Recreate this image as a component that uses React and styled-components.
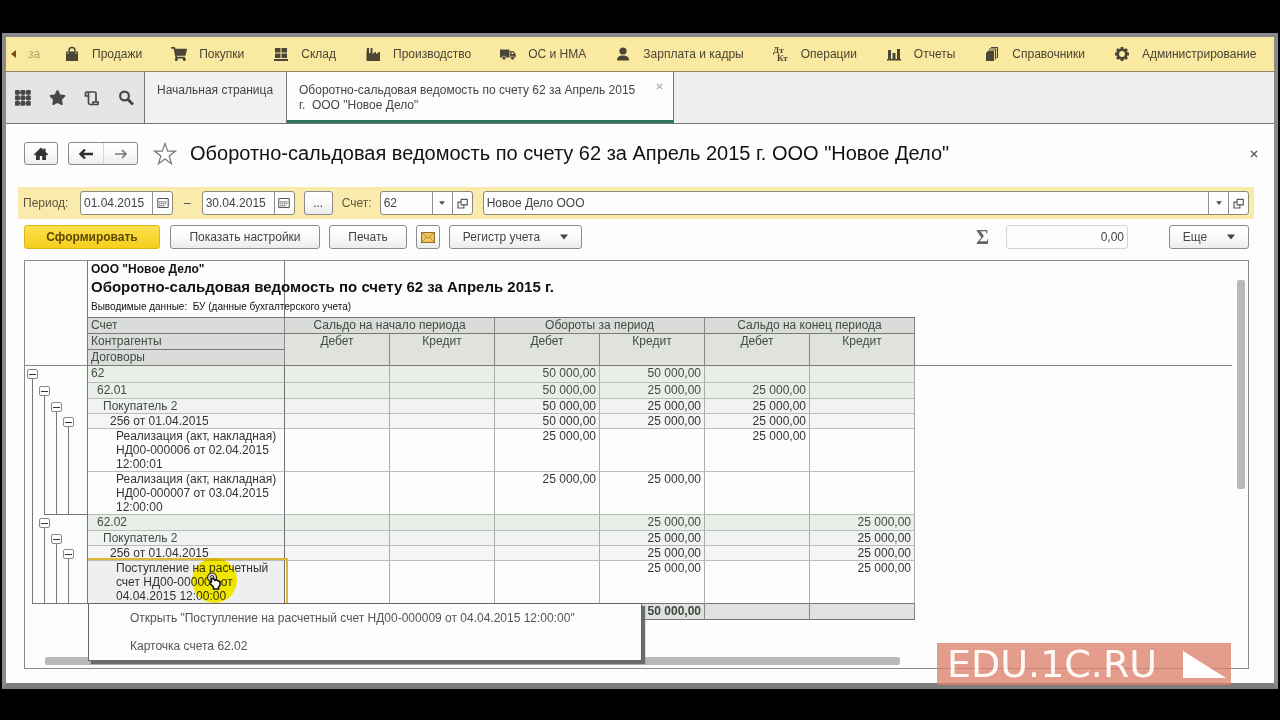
import React from "react"
import styled, { createGlobalStyle, css } from "styled-components"
import { FaShoppingCart, FaStar } from "react-icons/fa"

const GlobalStyle = createGlobalStyle`
  * {
    box-sizing: border-box;
  }
  body {
    margin: 0;
    background: #000;
    color: #444;
    font-family: "Liberation Sans", Arial, sans-serif;
    font-size: 12px;
  }
  button,
  input {
    font: inherit;
    color: inherit;
    margin: 0;
  }
  button {
    cursor: pointer;
  }
  svg {
    display: block;
    flex: none;
  }
`

const Screen = styled.div`
  position: relative;
  display: flex;
  flex-direction: column;
  min-height: 100vh;
  padding: 33px 2px 31px;
`
const Window = styled.div`
  flex: 1;
  display: flex;
  flex-direction: column;
  border: 4px solid #8b898c;
  border-bottom: 6px solid #7d7d7d;
  background: #fdfdfd;
`

/* sections bar */
const SectionBar = styled.nav`
  display: flex;
  align-items: center;
  gap: 29px;
  height: 35px;
  padding: 0 12px 0 5px;
  background: #fae9a0;
  border-bottom: 1px solid #8d8668;
  overflow: hidden;
`
const SectionScroll = styled.button`
  display: flex;
  align-items: center;
  gap: 12px;
  width: 24px;
  padding: 0;
  border: none;
  background: none;
  color: #b5a56b;
`
const SectionLink = styled.a`
  display: flex;
  align-items: center;
  gap: 12px;
  color: #4a4535;
  white-space: nowrap;
  text-decoration: none;
`

/* open windows bar */
const TabBar = styled.div`
  display: flex;
  height: 52px;
  background: #eee;
  border-bottom: 1px solid #777;
`
const Tools = styled.div`
  display: flex;
  align-items: center;
  gap: 18px;
  width: 139px;
  padding-left: 9px;
  background: #e5e5e5;
  border-right: 1px solid #777;
`
const ToolButton = styled.button`
  display: flex;
  padding: 0;
  border: none;
  background: none;
  color: #484848;
`
const Tab = styled.div`
  display: flex;
  align-items: flex-start;
  width: ${(props) => (props.$active ? "387px" : "142px")};
  padding: 11px 10px 0 12px;
  border-right: 1px solid #777;
  background: ${(props) => (props.$active ? "#fdfdfd" : "#f1f1f1")};
  ${(props) =>
    props.$active &&
    css`
      gap: 14px;
      border-bottom: 3px solid #2f7559;
    `}
`
const TabTitle = styled.button`
  flex: 1;
  padding: 0;
  border: none;
  background: none;
  text-align: left;
  line-height: 15px;
  white-space: pre-wrap;
`
const CloseButton = styled.button`
  display: flex;
  padding: 0;
  border: none;
  background: none;
  color: ${(props) => props.$color};
`

/* form */
const Form = styled.main`
  flex: 1;
  display: flex;
  flex-direction: column;
  padding: 18px 20px 14px 12px;
`
const TitleRow = styled.div`
  display: flex;
  align-items: center;
  height: 23px;
  margin: 0 -4px 22px 6px;
`
const buttonFace = css`
  border: 1px solid #8c8c8c;
  border-radius: 3px;
  background: linear-gradient(#fff, #fafafa 50%, #ececec);
`
const HomeButton = styled.button`
  ${buttonFace}
  display: flex;
  align-items: center;
  justify-content: center;
  width: 34px;
  height: 23px;
  padding: 0;
  color: #333;
`
const History = styled.div`
  ${buttonFace}
  display: flex;
  height: 23px;
  margin: 0 15px 0 10px;
  button {
    display: flex;
    align-items: center;
    justify-content: center;
    width: 34px;
    padding: 0;
    border: none;
    background: none;
    color: #2d2d2d;
  }
  button + button {
    border-left: 1px solid #d6d6d6;
    color: #777;
  }
`
const Title = styled.h1`
  flex: 1;
  margin: 0 0 0 13px;
  color: #111;
  font-size: 20px;
  font-weight: normal;
  white-space: nowrap;
`
const Filter = styled.div`
  display: flex;
  align-items: center;
  height: 32px;
  padding: 0 5px;
  background: #f9ebab;
`
const FieldLabel = styled.label`
  width: ${(props) => props.$width};
  color: #5c5640;
`
const FieldBox = styled.div`
  display: flex;
  height: 24px;
  width: ${(props) => props.$width || "auto"};
  flex: ${(props) => (props.$width ? "none" : 1)};
  border: 1px solid #8f8a78;
  border-radius: 3px;
  background: #fdfdfd;
  input {
    flex: 1;
    min-width: 0;
    padding: 0 3px;
    border: none;
    background: none;
    outline: none;
  }
  button {
    display: flex;
    align-items: center;
    justify-content: center;
    width: 20px;
    padding: 0;
    border: none;
    border-left: 1px solid #8f8f8f;
    background: none;
    color: #555;
  }
`
const AccountBox = styled(FieldBox)`
  margin-right: 10px;
`
const Dash = styled.span`
  margin: 0 11px;
`
const Commands = styled.div`
  display: flex;
  align-items: center;
  gap: 9px;
  margin: 6px 5px 11px 6px;
`
const Button = styled.button`
  ${buttonFace}
  display: flex;
  align-items: center;
  justify-content: center;
  gap: 20px;
  width: ${(props) => props.$width};
  height: 24px;
  padding: 0;
  ${(props) =>
    props.$primary &&
    css`
      margin-right: 1px;
      border-color: #d9b61c;
      background: linear-gradient(#fbe04e, #f5cf1d);
      color: #5d4a00;
      font-weight: bold;
    `}
`
const MoreButton = styled(Button)`
  margin: 0 9px;
`
const Sigma = styled.label`
  margin: 0 8px 0 auto;
  color: #666;
  font-family: "Liberation Serif", serif;
  font-size: 20px;
  font-weight: bold;
  line-height: 24px;
`
const SumInput = styled.input`
  width: 122px;
  height: 24px;
  margin-right: 32px;
  padding: 0 3px;
  border: 1px solid #d4d4d4;
  border-radius: 3px;
  background: #fdfdfd;
  text-align: right;
`

/* spreadsheet */
const Sheet = styled.div`
  flex: 1;
  display: grid;
  grid-template-columns: 1fr 16px;
  grid-template-rows: 1fr 12px;
  margin: 0 5px 0 6px;
  border: 1px solid #8a8a8a;
`
const VerticalTrack = styled.div`
  display: flex;
  justify-content: center;
  padding: 19px 0 0 2px;
`
const HorizontalTrack = styled.div`
  padding: 1px 0 0 20px;
`
const Thumb = styled.div`
  border-radius: 2px;
  background: #b9b9b9;
  ${(props) =>
    props.$vertical ? "width: 8px; height: 209px;" : "width: 72%; height: 8px;"}
`
const Report = styled.table`
  align-self: start;
  width: 100%;
  table-layout: fixed;
  border-collapse: separate;
  border-spacing: 0;
  color: #333;
  line-height: 14px;
  td,
  th {
    padding: 0 3px;
    vertical-align: top;
  }
`
const Col = styled.col`
  width: ${(props) => props.$width};
`
const Gutter = styled.td`
  && {
    height: ${(props) => props.$height};
    padding: 0 0 0 2px;
    border-right: 1px solid #777;
    ${(props) => props.$frozen && "border-bottom: 1px solid #888;"}
  }
`
const Filler = styled.td`
  ${(props) => props.$frozen && "border-bottom: 1px solid #888;"}
`
const HeadingCell = styled.td`
  border-right: 1px solid #777;
  ${(props) => props.$last && "border-bottom: 1px solid #777;"}
  color: #111;
  font-size: ${(props) => props.$size};
  font-weight: ${(props) => (props.$bold ? "bold" : "normal")};
  white-space: pre;
  && {
    vertical-align: middle;
  }
`
const HeadingRest = styled.td`
  ${(props) => props.$last && "border-bottom: 1px solid #777;"}
`
const HeadCell = styled.th`
  height: 16px;
  border-right: 1px solid #858885;
  border-bottom: 1px solid #777a77;
  background: ${(props) => (props.$light ? "#e0e3dc" : "#dadcd9")};
  color: #414c44;
  font-weight: normal;
  text-align: ${(props) => props.$align || "center"};
`
const levelColors = ["#e9eee6", "#e8eee8", "#f1f3f1", "#f5f5f4", "#fdfdfd"]
const levelIndents = ["3px", "9px", "15px", "22px", "28px"]

const NameCell = styled.th`
  position: relative;
  border-right: 1px solid #6f6f6f;
  border-bottom: 1px solid ${(props) => (props.$last ? "#777" : "#b9bcb9")};
  background: ${(props) => (props.$selected ? "#f0eff0" : levelColors[props.$level])};
  color: ${(props) => (props.$level < 3 ? "#414c44" : "#333")};
  font-weight: normal;
  text-align: left;
  && {
    padding-left: ${(props) => levelIndents[props.$level]};
  }
`
const SumCell = styled.td`
  border-right: 1px solid #a9aca9;
  border-bottom: 1px solid ${(props) => (props.$last ? "#777" : "#b9bcb9")};
  background: ${(props) => levelColors[props.$level]};
  color: ${(props) => (props.$level < 2 ? "#414c44" : "#333")};
  text-align: right;
`
const TotalCell = styled.td`
  height: 16px;
  border-right: 1px solid #858885;
  border-bottom: 1px solid #777a77;
  background: #dfe2df;
  color: #3d4a41;
  font-weight: bold;
  text-align: right;
`

/* outline in the gutter */
const Tree = styled.div`
  display: flex;
  height: 100%;
`
const TreeStep = styled.span`
  display: flex;
  flex-direction: column;
  width: 12px;
  &:last-child {
    flex: 1;
  }
`
const Stem = styled.span`
  flex: 1;
  margin-left: 5px;
  border-left: 1px solid #777;
  ${(props) => props.$foot && "border-bottom: 1px solid #777;"}
`
const FootStem = styled.span`
  flex: 1;
  border-bottom: 1px solid #777;
  background: linear-gradient(#777, #777) 5px 0 / 1px 100% no-repeat;
`
const Toggle = styled.button`
  display: flex;
  align-items: center;
  justify-content: center;
  width: 11px;
  height: 10px;
  margin-top: 3px;
  padding: 0;
  border: 1px solid #888;
  border-radius: 2px;
  background: #fff;
  &::before {
    content: "";
    width: 7px;
    height: 1px;
    background: #333;
  }
`

/* selected cell */
const Selection = styled.span`
  position: absolute;
  inset: -3px -4px 0 0;
  border-top: 2px solid #dcb93a;
  border-right: 2px solid #dcb93a;
`
const Spot = styled.span`
  position: absolute;
  left: 104px;
  top: -3px;
  width: 45px;
  height: 45px;
  border-radius: 50%;
  background: #fff600;
  mix-blend-mode: multiply;
`
const Pointer = styled.span`
  position: absolute;
  left: 118px;
  top: 11px;
`
const Popup = styled.div`
  position: absolute;
  z-index: 2;
  top: 100%;
  left: 0;
  width: 554px;
  border: 1px solid #666;
  background: #fdfdfd;
  box-shadow: 3px 3px 1px #6b6b6b;
`
const PopupItem = styled.button`
  display: block;
  width: 100%;
  height: 28px;
  padding: 0 41px;
  border: none;
  background: none;
  color: #555;
  text-align: left;
  white-space: nowrap;
`
const Watermark = styled.div`
  position: absolute;
  right: 49px;
  bottom: 35px;
  display: flex;
  align-items: center;
  justify-content: space-between;
  width: 294px;
  height: 42px;
  padding: 0 5px 0 10px;
  background: rgba(221, 128, 108, 0.78);
  color: #fffaf5;
  font-family: "DejaVu Sans", sans-serif;
  font-size: 38px;
`

const Icon = ({ size = 16, children }) => (
  <svg width={size} height={size} viewBox="0 0 16 16" fill="currentColor" aria-hidden="true">
    {children}
  </svg>
)
const BagIcon = () => (
  <Icon>
    <path d="M2 5.500h12V15H2z" />
    <path d="M5 8V4.500a3 3 0 0 1 6 0V8" fill="none" stroke="currentColor" strokeWidth="1.400" />
    <path d="M4 6v2M12 6v2" stroke="#fae9a0" strokeWidth="0.800" />
  </Icon>
)
const StockIcon = () => (
  <Icon>
    <path d="M2 2h5.500v4.500H2zM8.500 2H14v4.500H8.500zM2 7.500h5.500V12H2zM8.500 7.500H14V12H8.500zM1 13h14v2H1z" />
  </Icon>
)
const FactoryIcon = () => (
  <Icon>
    <path d="M1.500 15V7L2 2h2v5h1.500V2h2v6l3.500-2.500V8l4-2.500V15z" />
  </Icon>
)
const TruckIcon = () => (
  <Icon>
    <path d="M0 3.500h9.500v8H0zM10.200 5h3l2.500 3v3.500h-5.500z" />
    <path d="M11.500 6.200h1.400l1.300 1.800h-2.700z" fill="#fae9a0" />
    <circle cx="4" cy="12" r="1.900" stroke="#fae9a0" strokeWidth="0.600" />
    <circle cx="12.500" cy="12" r="1.900" stroke="#fae9a0" strokeWidth="0.600" />
  </Icon>
)
const PersonIcon = () => (
  <Icon>
    <circle cx="8" cy="5" r="3.600" />
    <path d="M2 14.500c0-3.500 2-4.500 4.200-5h3.600c2.200.5 4.200 1.500 4.200 5z" />
  </Icon>
)
const PostingIcon = () => (
  <Icon>
    <text x="0" y="7" fontSize="9" fontWeight="bold" fontFamily="Liberation Serif, serif">Дт</text>
    <text x="4" y="15" fontSize="9" fontWeight="bold" fontFamily="Liberation Serif, serif">Кт</text>
  </Icon>
)
const ChartIcon = () => (
  <Icon>
    <path d="M2 4h3v9H2zM6.500 7h3v6h-3zM11 3h3v10h-3zM1 13h14v1.500H1z" />
  </Icon>
)
const BooksIcon = () => (
  <Icon>
    <path d="M2 7l2.500-2.500H10V15H2z" />
    <path d="M5 3h6.500v10.500M7 1.500h6.500V12" fill="none" stroke="currentColor" strokeWidth="1.200" />
  </Icon>
)
const GearIcon = () => (
  <Icon>
    <circle cx="8" cy="8" r="4.300" fill="none" stroke="currentColor" strokeWidth="2.800" />
    <path
      d="M8 1v2.500M8 12.500V15M1 8h2.500M12.500 8H15M3 3l2 2M11 11l2 2M13 3l-2 2M5 11l-2 2"
      stroke="currentColor"
      strokeWidth="2.800"
    />
  </Icon>
)
const GridIcon = () => (
  <Icon>
    {[0, 5.5, 11].map((y) =>
      [0, 5.5, 11].map((x) => <rect key={`${x}-${y}`} x={x} y={y} width="4.800" height="4.800" rx="1" />)
    )}
    <path d="M2 2.400h12M2 8h12M2 13.500h12M2.400 2v12M8 2v12M13.500 2v12" stroke="currentColor" strokeWidth="0.800" />
  </Icon>
)
const ScrollIcon = () => (
  <Icon>
    <path
      d="M4.500 6H1.500V3.500a1.500 1.500 0 0 1 3 0V13a2 2 0 0 0 2 1.500H14V12h-2V3.500A1.500 1.500 0 0 0 10.500 2H3M12 12H9v2"
      fill="none"
      stroke="currentColor"
      strokeWidth="1.700"
    />
  </Icon>
)
const SearchIcon = () => (
  <Icon>
    <circle cx="6.500" cy="6" r="4.400" fill="none" stroke="currentColor" strokeWidth="2.200" />
    <path d="M9.500 9l5.500 5.500" stroke="currentColor" strokeWidth="3" />
  </Icon>
)
const HomeIcon = () => (
  <Icon>
    <path d="M8 1.500L0.800 8.500l1 1L3 8.500V14h3.800v-4h2.400v4H13V8.500l1.200 1 1-1-2.700-2.700V2.500h-2v1.400z" />
  </Icon>
)
const CrossIcon = ({ size }) => (
  <Icon size={size}>
    <path d="M2 2l12 12M14 2L2 14" stroke="currentColor" strokeWidth="2.600" />
  </Icon>
)
const ArrowIcon = ({ back }) => (
  <Icon>
    <path
      d={back ? "M15 8H3M7 3.500L2.500 8 7 12.500" : "M2 8h11M9 4l4 4-4 4"}
      fill="none"
      stroke="currentColor"
      strokeWidth={back ? 2.4 : 1.7}
    />
  </Icon>
)
const CalendarIcon = () => (
  <Icon size={12}>
    <rect x="1" y="2" width="14" height="12" rx="1" fill="none" stroke="currentColor" strokeWidth="1.400" />
    <path d="M3 6.500h10M3 9h10M3 11.500h7" stroke="currentColor" strokeWidth="1.600" strokeDasharray="1.600 1" />
  </Icon>
)
const OpenIcon = () => (
  <Icon size={11}>
    <path d="M6 2h9v8H6zM6 6H1.500v8.500H10V10" fill="none" stroke="currentColor" strokeWidth="1.600" />
  </Icon>
)
const DownIcon = ({ size = 6 }) => (
  <Icon size={size}>
    <path d="M0 3h16l-8 10z" />
  </Icon>
)
const MailIcon = () => (
  <svg width="14" height="11" viewBox="0 0 14 11" aria-hidden="true">
    <rect x="0.500" y="0.500" width="13" height="10" fill="#f2c65a" stroke="#8f6f2d" />
    <path d="M1 1l6 5 6-5M1 10l4.500-5M13 10L8.500 5" fill="none" stroke="#b98a33" />
  </svg>
)
const StarOutline = () => (
  <svg width="24" height="24" viewBox="0 0 24 24" aria-hidden="true">
    <path
      d="M12 1.500l2.700 7.600h7.800l-6.300 4.800 2.300 7.900L12 17l-6.500 4.800 2.300-7.900L1.500 9.100h7.800z"
      fill="#fff"
      stroke="#777"
      strokeWidth="1.200"
    />
  </svg>
)
const PointerIcon = () => (
  <svg width="16" height="19" viewBox="0 0 16 19" aria-hidden="true">
    <circle cx="6" cy="5.500" r="4.500" fill="#e8e8c8" stroke="#222" strokeWidth="1.200" />
    <path d="M4 5.500a2 2 0 0 1 4 0M4.500 7.500h3" fill="none" stroke="#222" />
    <path d="M5 7l2-1 2 2.500 1.500-1 1.500 1.500 2 .5v4l-1.500 1.500V17H7.500v-2L4 11.500 5.500 10z" fill="#fff" stroke="#111" strokeWidth="1.600" />
  </svg>
)

const sections = [
  { title: "Продажи", icon: <BagIcon /> },
  { title: "Покупки", icon: <FaShoppingCart size={16} /> },
  { title: "Склад", icon: <StockIcon /> },
  { title: "Производство", icon: <FactoryIcon /> },
  { title: "ОС и НМА", icon: <TruckIcon /> },
  { title: "Зарплата и кадры", icon: <PersonIcon /> },
  { title: "Операции", icon: <PostingIcon /> },
  { title: "Отчеты", icon: <ChartIcon /> },
  { title: "Справочники", icon: <BooksIcon /> },
  { title: "Администрирование", icon: <GearIcon /> },
]

const headings = [
  { text: 'ООО "Новое Дело"', height: "16px", size: "12px", bold: true },
  { text: "Оборотно-сальдовая ведомость по счету 62 за Апрель 2015 г.", height: "20px", size: "15px", bold: true },
  { text: "Выводимые данные:  БУ (данные бухгалтерского учета)", height: "21px", size: "10px", last: true },
]

// tree: one entry per outline step, sums: opening Dt/Kt, turnover Dt/Kt, closing Dt/Kt
const rows = [
  { name: "62", level: 0, height: "17px", tree: ["node"], sums: ["", "", "50 000,00", "50 000,00", "", ""] },
  { name: "62.01", level: 1, height: "16px", tree: ["line", "node"], sums: ["", "", "50 000,00", "25 000,00", "25 000,00", ""] },
  { name: "Покупатель 2", level: 2, height: "15px", tree: ["line", "line", "node"], sums: ["", "", "50 000,00", "25 000,00", "25 000,00", ""] },
  { name: "256 от 01.04.2015", level: 3, height: "15px", tree: ["line", "line", "line", "node"], sums: ["", "", "50 000,00", "25 000,00", "25 000,00", ""] },
  { name: "Реализация (акт, накладная) НД00-000006 от 02.04.2015 12:00:01", level: 4, height: "43px", tree: ["line", "line", "line", "line"], sums: ["", "", "25 000,00", "", "25 000,00", ""] },
  { name: "Реализация (акт, накладная) НД00-000007 от 03.04.2015 12:00:00", level: 4, height: "43px", tree: ["line", "end", "foot", "foot"], sums: ["", "", "25 000,00", "25 000,00", "", ""] },
  { name: "62.02", level: 1, height: "16px", tree: ["line", "node"], sums: ["", "", "", "25 000,00", "", "25 000,00"] },
  { name: "Покупатель 2", level: 2, height: "15px", tree: ["line", "line", "node"], sums: ["", "", "", "25 000,00", "", "25 000,00"] },
  { name: "256 от 01.04.2015", level: 3, height: "15px", tree: ["line", "line", "line", "node"], sums: ["", "", "", "25 000,00", "", "25 000,00"] },
  { name: "Поступление на расчетный счет НД00-000009 от 04.04.2015 12:00:00", level: 4, height: "43px", tree: ["end", "foot", "foot", "foot"], selected: true, sums: ["", "", "", "25 000,00", "", "25 000,00"] },
]

const Outline = ({ steps }) => (
  <Tree>
    {steps.map((step, index) => (
      <TreeStep key={index}>
        {step === "node" && <Toggle aria-label="Свернуть" />}
        {step === "foot" ? <FootStem /> : <Stem $foot={step === "end"} />}
      </TreeStep>
    ))}
  </Tree>
)

const ReportRow = ({ row, last }) => (
  <tr>
    <Gutter $height={row.height}>
      <Outline steps={row.tree} />
    </Gutter>
    <NameCell scope="row" $level={row.level} $selected={row.selected} $last={last}>
      {row.name}
      {row.selected && (
        <>
          <Selection />
          <Spot />
          <Pointer>
            <PointerIcon />
          </Pointer>
          <Popup>
            <PopupItem>Открыть "Поступление на расчетный счет НД00-000009 от 04.04.2015 12:00:00"</PopupItem>
            <PopupItem>Карточка счета 62.02</PopupItem>
          </Popup>
        </>
      )}
    </NameCell>
    {row.sums.map((sum, index) => (
      <SumCell key={index} $level={row.level} $last={last}>
        {sum}
      </SumCell>
    ))}
    <Filler />
  </tr>
)

const ReportHead = () => (
  <thead>
    {headings.map((heading) => (
      <tr key={heading.text}>
        <Gutter $height={heading.height} />
        <HeadingCell $size={heading.size} $bold={heading.bold} $last={heading.last}>
          {heading.text}
        </HeadingCell>
        <HeadingRest colSpan={6} $last={heading.last} />
        <Filler />
      </tr>
    ))}
    <tr>
      <Gutter $height="16px" />
      <HeadCell $align="left">Счет</HeadCell>
      <HeadCell colSpan={2}>Сальдо на начало периода</HeadCell>
      <HeadCell colSpan={2}>Обороты за период</HeadCell>
      <HeadCell colSpan={2}>Сальдо на конец периода</HeadCell>
      <Filler />
    </tr>
    <tr>
      <Gutter $height="16px" />
      <HeadCell $align="left">Контрагенты</HeadCell>
      {["Дебет", "Кредит", "Дебет", "Кредит", "Дебет", "Кредит"].map((side, index) => (
        <HeadCell key={index} rowSpan={2} $light>{side}</HeadCell>
      ))}
      <Filler />
    </tr>
    <tr>
      <Gutter $height="16px" $frozen />
      <HeadCell $align="left">Договоры</HeadCell>
      <Filler $frozen />
    </tr>
  </thead>
)

const FilterRow = () => (
  <Filter>
    <FieldLabel htmlFor="from" $width="57px">Период:</FieldLabel>
    <FieldBox $width="93px">
      <input id="from" defaultValue="01.04.2015" />
      <button aria-label="Календарь"><CalendarIcon /></button>
    </FieldBox>
    <Dash>–</Dash>
    <FieldBox $width="93px">
      <input aria-label="Конец периода" defaultValue="30.04.2015" />
      <button aria-label="Календарь"><CalendarIcon /></button>
    </FieldBox>
    <MoreButton $width="29px">...</MoreButton>
    <FieldLabel htmlFor="account" $width="38px">Счет:</FieldLabel>
    <AccountBox $width="93px">
      <input id="account" defaultValue="62" />
      <button aria-label="Выбрать счет"><DownIcon /></button>
      <button aria-label="Открыть счет"><OpenIcon /></button>
    </AccountBox>
    <FieldBox>
      <input aria-label="Организация" defaultValue="Новое Дело ООО" />
      <button aria-label="Выбрать организацию"><DownIcon /></button>
      <button aria-label="Открыть организацию"><OpenIcon /></button>
    </FieldBox>
  </Filter>
)

const App = () => (
  <>
    <GlobalStyle />
    <Screen>
      <Window>
        <SectionBar>
          <SectionScroll>
            <svg width="5" height="8" viewBox="0 0 5 8" aria-hidden="true">
              <path d="M5 0v8L0 4z" fill="#7a4a10" />
            </svg>
            за
          </SectionScroll>
          {sections.map((section) => (
            <SectionLink key={section.title} href="#">
              {section.icon}
              {section.title}
            </SectionLink>
          ))}
        </SectionBar>
        <TabBar>
          <Tools>
            <ToolButton aria-label="Меню"><GridIcon /></ToolButton>
            <ToolButton aria-label="Избранное"><FaStar size={17} /></ToolButton>
            <ToolButton aria-label="История"><ScrollIcon /></ToolButton>
            <ToolButton aria-label="Поиск"><SearchIcon /></ToolButton>
          </Tools>
          <Tab>
            <TabTitle>Начальная страница</TabTitle>
          </Tab>
          <Tab $active>
            <TabTitle>{'Оборотно-сальдовая ведомость по счету 62 за Апрель 2015 г.  ООО "Новое Дело"'}</TabTitle>
            <CloseButton aria-label="Закрыть вкладку" $color="#aaa"><CrossIcon size={7} /></CloseButton>
          </Tab>
        </TabBar>
        <Form>
          <TitleRow>
            <HomeButton aria-label="Начальная страница"><HomeIcon /></HomeButton>
            <History>
              <button aria-label="Назад"><ArrowIcon back /></button>
              <button aria-label="Вперед"><ArrowIcon /></button>
            </History>
            <StarOutline />
            <Title>Оборотно-сальдовая ведомость по счету 62 за Апрель 2015 г. ООО "Новое Дело"</Title>
            <CloseButton aria-label="Закрыть" $color="#555"><CrossIcon size={8} /></CloseButton>
          </TitleRow>
          <FilterRow />
          <Commands>
            <Button $width="136px" $primary>Сформировать</Button>
            <Button $width="150px">Показать настройки</Button>
            <Button $width="78px">Печать</Button>
            <Button $width="24px" aria-label="Отправить"><MailIcon /></Button>
            <Button $width="133px">Регистр учета <DownIcon size={8} /></Button>
            <Sigma htmlFor="sum">Σ</Sigma>
            <SumInput id="sum" defaultValue="0,00" />
            <Button $width="80px">Еще <DownIcon size={8} /></Button>
          </Commands>
          <Sheet>
            <Report>
              <colgroup>
                <Col $width="63px" />
                <Col $width="197px" />
                {[0, 1, 2, 3, 4, 5].map((index) => (
                  <Col key={index} $width="105px" />
                ))}
                <Col />
              </colgroup>
              <ReportHead />
              <tbody>
                {rows.map((row, index) => (
                  <ReportRow key={index} row={row} last={index === rows.length - 1} />
                ))}
                <tr>
                  <td />
                  {["", "", "", "", "50 000,00", "", ""].map((sum, index) => (
                    <TotalCell key={index}>{sum}</TotalCell>
                  ))}
                  <Filler />
                </tr>
              </tbody>
            </Report>
            <VerticalTrack>
              <Thumb $vertical />
            </VerticalTrack>
            <HorizontalTrack>
              <Thumb />
            </HorizontalTrack>
          </Sheet>
        </Form>
      </Window>
      <Watermark>
        EDU.1C.RU
        <svg width="43" height="27" viewBox="0 0 43 27" aria-hidden="true">
          <path d="M0 0l43 27H0z" fill="#fff" />
        </svg>
      </Watermark>
    </Screen>
  </>
)

export default App
